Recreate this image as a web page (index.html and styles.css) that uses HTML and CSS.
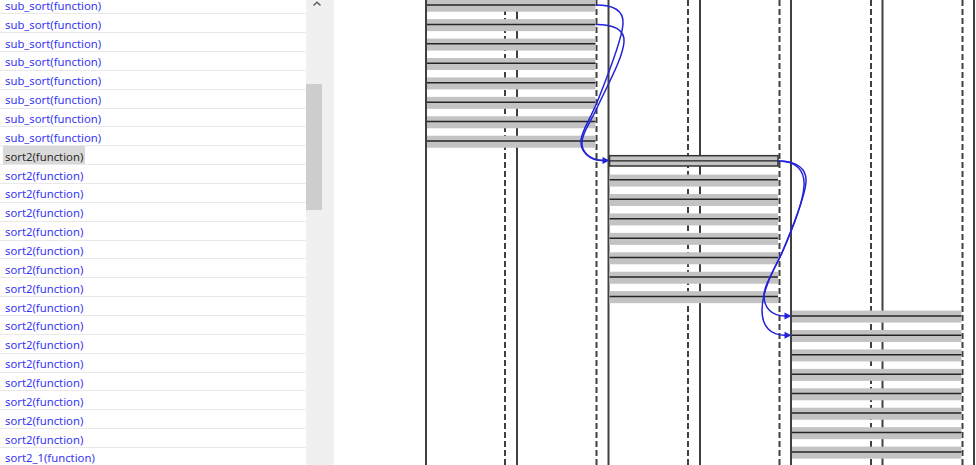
FILE: index.html
```html
<!DOCTYPE html>
<html>
<head>
<meta charset="utf-8">
<link rel="stylesheet" href="styles.css">
</head>
<body>
<div class="app">
  <div class="list">
    <div class="rows">
      <div class="row"><span class="label">sub_sort(function)</span></div>
      <div class="row"><span class="label">sub_sort(function)</span></div>
      <div class="row"><span class="label">sub_sort(function)</span></div>
      <div class="row"><span class="label">sub_sort(function)</span></div>
      <div class="row"><span class="label">sub_sort(function)</span></div>
      <div class="row"><span class="label">sub_sort(function)</span></div>
      <div class="row"><span class="label">sub_sort(function)</span></div>
      <div class="row"><span class="label">sub_sort(function)</span></div>
      <div class="row selected"><span class="label">sort2(function)</span></div>
      <div class="row"><span class="label">sort2(function)</span></div>
      <div class="row"><span class="label">sort2(function)</span></div>
      <div class="row"><span class="label">sort2(function)</span></div>
      <div class="row"><span class="label">sort2(function)</span></div>
      <div class="row"><span class="label">sort2(function)</span></div>
      <div class="row"><span class="label">sort2(function)</span></div>
      <div class="row"><span class="label">sort2(function)</span></div>
      <div class="row"><span class="label">sort2(function)</span></div>
      <div class="row"><span class="label">sort2(function)</span></div>
      <div class="row"><span class="label">sort2(function)</span></div>
      <div class="row"><span class="label">sort2(function)</span></div>
      <div class="row"><span class="label">sort2(function)</span></div>
      <div class="row"><span class="label">sort2(function)</span></div>
      <div class="row"><span class="label">sort2(function)</span></div>
      <div class="row"><span class="label">sort2(function)</span></div>
      <div class="row"><span class="label">sort2_1(function)</span></div>
    </div>
  </div>
  <div class="scrollbar">
    <div class="scroll-up">
      <svg width="10" height="8" viewBox="0 0 10 8"><path d="M1.5 5.5 L5 2.2 L8.5 5.5" fill="none" stroke="#5a5a5a" stroke-width="1.4"/></svg>
    </div>
    <div class="thumb"></div>
  </div>
  <div class="canvas">
    <svg class="diagram" width="642" height="465" viewBox="334 0 642 465">
      <defs>
        <g id="b1"><rect x="427" y="-5.3" width="168.5" height="12" class="band"/><line x1="427" x2="595.5" y1="0" y2="0" class="bline"/></g>
        <g id="b2"><rect x="609.5" y="-5.3" width="168.5" height="12" class="band"/><line x1="609.5" x2="778" y1="0" y2="0" class="bline"/></g>
        <g id="b3"><rect x="792" y="-5.3" width="169.5" height="12" class="band"/><line x1="792" x2="961.5" y1="0" y2="0" class="bline"/></g>
      </defs>
      <g class="solid">
        <line x1="426" x2="426" y1="0" y2="465"/>
        <line x1="517" x2="517" y1="0" y2="465"/>
        <line x1="608.5" x2="608.5" y1="0" y2="465"/>
        <line x1="700" x2="700" y1="0" y2="465"/>
        <line x1="791" x2="791" y1="0" y2="465"/>
        <line x1="882.5" x2="882.5" y1="0" y2="465"/>
        <line x1="974" x2="974" y1="0" y2="465"/>
      </g>
      <g class="dashed">
        <line x1="505" x2="505" y1="0" y2="465"/>
        <line x1="596.5" x2="596.5" y1="0" y2="465"/>
        <line x1="688" x2="688" y1="0" y2="465"/>
        <line x1="779.5" x2="779.5" y1="0" y2="465"/>
        <line x1="871" x2="871" y1="0" y2="465"/>
        <line x1="962.5" x2="962.5" y1="0" y2="465"/>
      </g>
      <use href="#b1" y="5"/>
      <use href="#b1" y="24.43"/>
      <use href="#b1" y="43.86"/>
      <use href="#b1" y="63.29"/>
      <use href="#b1" y="82.72"/>
      <use href="#b1" y="102.15"/>
      <use href="#b1" y="121.58"/>
      <use href="#b1" y="141.01"/>
      <rect x="609.5" y="155.7" width="168.5" height="10.3" class="header"/>
      <line x1="609.5" x2="778" y1="160.9" y2="160.9" class="hline"/>
      <use href="#b2" y="179.87"/>
      <use href="#b2" y="199.3"/>
      <use href="#b2" y="218.73"/>
      <use href="#b2" y="238.16"/>
      <use href="#b2" y="257.59"/>
      <use href="#b2" y="277.02"/>
      <use href="#b2" y="296.45"/>
      <use href="#b3" y="315.88"/>
      <use href="#b3" y="335.31"/>
      <use href="#b3" y="354.74"/>
      <use href="#b3" y="374.17"/>
      <use href="#b3" y="393.6"/>
      <use href="#b3" y="413.03"/>
      <use href="#b3" y="432.46"/>
      <use href="#b3" y="451.89"/>
      <g class="edge">
        <path d="M596 5 C613 5 624 10 623 24 C622 40 606 80 598 100 C590 120 582 130 581 140 C580 150 588 160.5 603 160.5"/>
        <path d="M596 24.4 C613 24.4 625 29 624 42 C623 58 606 88 597 108 C590 123 582 133 582 142 C581 151 589 160.5 603 160.5"/>
        <path d="M778 161 C796 161 807 168 806 182 C805 198 792 228 784 248 C776 268 764 284 764 296 C764 308 772 315.9 785 315.9"/>
        <path d="M778 161 C796 161 805 170 804 186 C803 203 790 235 781 255 C772 272 762 292 762 310 C762 327 771 335.3 785 335.3"/>
      </g>
      <g class="arrowhead">
        <polygon points="609.5,160.5 602.5,157 602.5,164"/>
        <polygon points="791.5,315.9 784.5,312.4 784.5,319.4"/>
        <polygon points="791.5,335.3 784.5,331.8 784.5,338.8"/>
      </g>
    </svg>
  </div>
</div>
</body>
</html>
```

FILE: styles.css
```css
html, body {
  margin: 0;
  padding: 0;
  background: #ffffff;
  overflow: hidden;
}

.app {
  display: flex;
  width: 976px;
  height: 465px;
  overflow: hidden;
}

.list {
  width: 306px;
  height: 465px;
  overflow: hidden;
  flex: none;
  background: #ffffff;
}

.rows {
  margin-top: -4.6px;
  display: flex;
  flex-direction: column;
}

.row {
  box-sizing: border-box;
  height: 18.86px;
  flex: none;
  border-bottom: 1px solid #e9e9e9;
  display: flex;
  align-items: stretch;
  padding-left: 5px;
  font-family: "Noto Sans", "Open Sans", sans-serif;
  font-size: 11.3px;
  color: #3636f4;
}

.label {
  display: flex;
  align-items: center;
  padding-top: 2px;
  white-space: nowrap;
}

.row.selected .label {
  background: #d9d9d9;
  color: #2a2a2a;
  margin-left: -2px;
  padding-left: 2px;
  padding-right: 2px;
}

.scrollbar {
  width: 28px;
  height: 465px;
  flex: none;
  background: #f0f0f0;
  display: flex;
  flex-direction: column;
}

.scroll-up {
  height: 12px;
  width: 16px;
  display: flex;
  justify-content: center;
  align-items: flex-start;
  padding-left: 3px;
}

.thumb {
  margin-top: 72px;
  width: 16px;
  height: 126px;
  background: #cdcdcd;
}

.canvas {
  flex: 1;
  height: 465px;
  background: #ffffff;
}

.diagram {
  display: block;
}

.solid line {
  stroke: #404040;
  stroke-width: 2;
}

.dashed line {
  stroke: #404040;
  stroke-width: 2;
  stroke-dasharray: 6 3;
}

.band {
  fill: #c3c3c3;
}

.bline {
  stroke: #262626;
  stroke-width: 1.5;
}

.header {
  fill: #c3c3c3;
  stroke: #333333;
  stroke-width: 1.5;
}

.hline {
  stroke: #222222;
  stroke-width: 1.2;
}

.edge path {
  fill: none;
  stroke: #2323d8;
  stroke-width: 1.5;
}

.arrowhead polygon {
  fill: #2323d8;
}
```
